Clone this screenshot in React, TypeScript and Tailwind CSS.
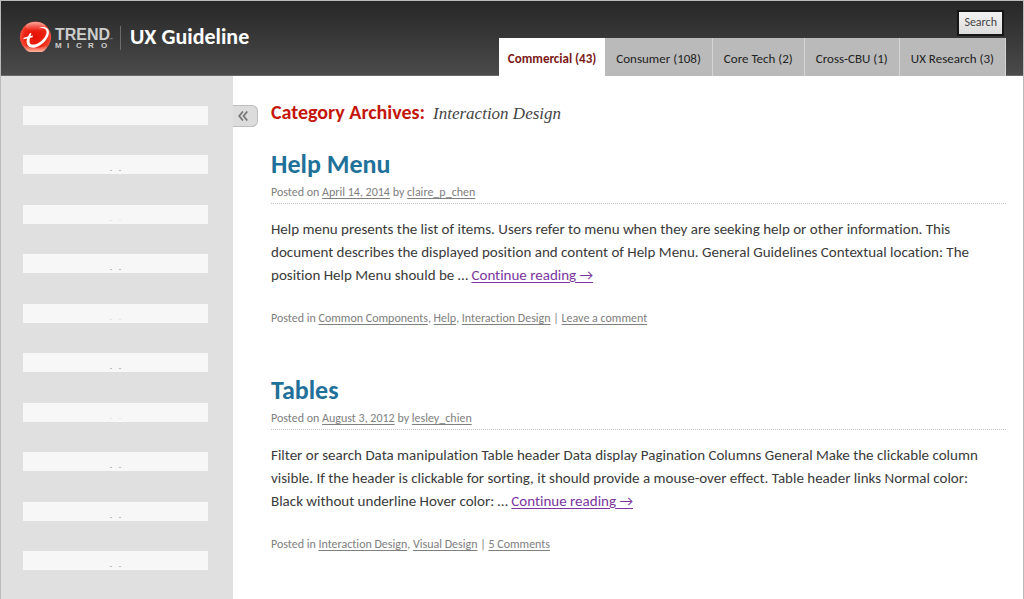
import React from "react";

type Tab = { label: string; active?: boolean };
type Post = {
  title: string;
  date: string;
  author: string;
  excerpt: string;
  categories: string[];
  comments: string;
};

const tabs: Tab[] = [
  { label: "Commercial (43)", active: true },
  { label: "Consumer (108)" },
  { label: "Core Tech (2)" },
  { label: "Cross-CBU (1)" },
  { label: "UX Research (3)" },
];

const posts: Post[] = [
  {
    title: "Help Menu",
    date: "April 14, 2014",
    author: "claire_p_chen",
    excerpt:
      "Help menu presents the list of items. Users refer to menu when they are seeking help or other information. This document describes the displayed position and content of Help Menu. General Guidelines Contextual location: The position Help Menu should be …",
    categories: ["Common Components", "Help", "Interaction Design"],
    comments: "Leave a comment",
  },
  {
    title: "Tables",
    date: "August 3, 2012",
    author: "lesley_chien",
    excerpt:
      "Filter or search Data manipulation Table header Data display Pagination Columns General Make the clickable column visible. If the header is clickable for sorting, it should provide a mouse-over effect. Table header links Normal color: Black without underline Hover color: …",
    categories: ["Interaction Design", "Visual Design"],
    comments: "5 Comments",
  },
];

const marks = ["none", "dark", "faint", "dark", "faint", "dark", "faint", "dark", "dark", "dark"];

function Logo() {
  return (
    <svg width="95" height="34" viewBox="0 0 95 34" role="img" aria-label="Trend Micro">
      <defs>
        <radialGradient id="ball" cx="0.5" cy="0.5" r="0.55">
          <stop offset="0" stopColor="#e50f04" />
          <stop offset="0.65" stopColor="#ee2514" />
          <stop offset="1" stopColor="#f5604a" />
        </radialGradient>
        <linearGradient id="shine" x1="0" y1="0" x2="0" y2="1">
          <stop offset="0" stopColor="#fff" stopOpacity="0.5" />
          <stop offset="1" stopColor="#fff" stopOpacity="0" />
        </linearGradient>
        <linearGradient id="glow" x1="0" y1="0" x2="0" y2="1">
          <stop offset="0" stopColor="#ffb29a" stopOpacity="0" />
          <stop offset="1" stopColor="#ffc0aa" stopOpacity="0.9" />
        </linearGradient>
      </defs>
      <path d="M16.500 0.500a15.500 15.500 0 0 1 10.500 27q-2 2.800-4.500 3.500H11q-3.500-1-5-3.500A15.500 15.500 0 0 1 16.500 0.500z" fill="url(#ball)" />
      <ellipse cx="16.500" cy="5.500" rx="10" ry="4.500" fill="url(#shine)" />
      <path d="M4 24Q16.500 30 29 24Q27 30 22.500 31H11Q6 30 4 24z" fill="url(#glow)" />
      <path
        d="M19.500 7.200C24.500 4.800 29.300 5.800 29.900 10.500C30.400 16.800 23.500 24.600 16.500 26.400C11 27.600 7.200 25 7.600 19.500L8.200 17.600L4.300 18.200Q4.300 16.900 5.500 16.500L9 15.500L10.800 12.200L12.400 12.100L11.600 14.900L14 14.600L13.600 16.200L11 16.900C9.800 21.500 11 24.200 15.500 23.500C21.500 22.200 27.600 15.600 27.600 10.900C27.500 7.200 24 6.300 19.500 7.200z"
        fill="#fff"
      />
      <g fill="#cdcdcd" fontFamily="'Liberation Sans', Arial, sans-serif" fontWeight="700">
        <text x="36" y="19" fontSize="16">TREND</text>
        <text x="36 48 57 69 82" y="27" fontSize="8">MICRO</text>
        <text x="90" y="20" fontSize="4" fill="#999">™</text>
      </g>
    </svg>
  );
}

function MetaLink({ children }: { children: React.ReactNode }) {
  return (
    <a href="#" className="underline underline-offset-2">
      {children}
    </a>
  );
}

function Article({ post }: { post: Post }) {
  return (
    <article>
      <h2 className="text-[26px] leading-8 font-bold text-[#1f7199]">
        <a href="#">{post.title}</a>
      </h2>
      <p className="border-b border-dotted border-[#c4c4c4] pt-1 pb-[3px] text-xs leading-4 text-[#808080]">
        Posted on <MetaLink>{post.date}</MetaLink> by <MetaLink>{post.author}</MetaLink>
      </p>
      <p className="pt-3.5 pr-2 text-[15px] leading-[23px] text-[#3a3a3a]">
        {post.excerpt}{" "}
        <a href="#" className="text-[#7b35a0] underline underline-offset-2">
          Continue reading →
        </a>
      </p>
      <p className="pt-[23px] text-xs leading-4 text-[#808080]">
        Posted in{" "}
        {post.categories.map((name, i) => (
          <React.Fragment key={name}>
            {i > 0 && ", "}
            <MetaLink>{name}</MetaLink>
          </React.Fragment>
        ))}{" "}
        | <MetaLink>{post.comments}</MetaLink>
      </p>
    </article>
  );
}

export default function App() {
  return (
    <div className="flex min-h-screen flex-col border border-[#b9bbba] bg-white font-['Carlito','Calibri','Lato',sans-serif] [font-variant-ligatures:none]">
      <header className="flex justify-between border-b border-[#6a6a6a] bg-linear-to-b from-[#272727] to-[#4b4b4b] pr-[17px] pl-[18px]">
        <div className="flex h-[74px] items-center">
          <Logo />
          <span className="ml-1.5 h-6 w-px bg-[#6c6c6c]" />
          <h1 className="ml-[9px] pb-1 text-[22px] font-bold text-white">UX Guideline</h1>
        </div>
        <div className="-mb-px flex flex-col items-end justify-between pt-[9px]">
          <button className="mr-0.5 h-[26px] border-2 border-[#161616] bg-linear-to-b from-[#f3f3f3] to-[#dcdcdc] px-[5px] pb-0.5 text-xs text-[#444] outline-none">
            Search
          </button>
          <nav className="flex text-[13px] text-[#222]">
            {tabs.map((tab) => (
              <a
                key={tab.label}
                href="#"
                className={
                  tab.active
                    ? "flex h-[38px] items-center bg-white px-[9px] pt-1 font-bold text-[#7c1a1a]"
                    : "flex h-[38px] items-center border-r border-[#d4d4d4] bg-[#bababa] px-[11px] pt-1"
                }
              >
                {tab.label}
              </a>
            ))}
          </nav>
        </div>
      </header>
      <div className="flex grow">
        <aside className="w-[232px] shrink-0 bg-[#e0e0e0] pt-[30px] pr-[25px] pl-[22px]">
          <ul>
            {marks.map((mark, i) => (
              <li key={i} className="flex h-[19px] items-end justify-center gap-[7px] bg-[#f7f7f7] pb-[3px] odd:mb-[30px] even:mb-[31px] last:mb-0">
                {mark !== "none" &&
                  [0, 1].map((n) => (
                    <span key={n} className={mark === "dark" ? "h-px w-0.5 bg-[#bbb]" : "h-px w-0.5 bg-[#e4e4e4]"} />
                  ))}
              </li>
            ))}
          </ul>
        </aside>
        <button
          aria-label="Collapse sidebar"
          className="mt-[29px] flex h-[22px] w-[25px] shrink-0 items-center justify-center rounded-r-md border border-l-0 border-[#bdbdbd] bg-[#dcdcdc] pr-1"
        >
          <svg width="10" height="10" viewBox="0 0 10 10" fill="none" stroke="#757575" strokeWidth="1.700" aria-hidden="true">
            <path d="M5 0.500L1.200 5L5 9.500M9.300 0.500L5.500 5L9.300 9.500" />
          </svg>
        </button>
        <main className="min-w-0 grow pt-[22px] pr-[17px] pb-8 pl-[13px]">
          <h1 className="flex items-baseline gap-2 text-xl leading-7 font-bold text-[#c4160c]">
            Category Archives:
            <em className="font-['Liberation_Serif',serif] text-[17px] font-normal text-[#444]">Interaction Design</em>
          </h1>
          <div className="flex flex-col gap-12 pt-5">
            {posts.map((post) => (
              <Article key={post.title} post={post} />
            ))}
          </div>
        </main>
      </div>
    </div>
  );
}
